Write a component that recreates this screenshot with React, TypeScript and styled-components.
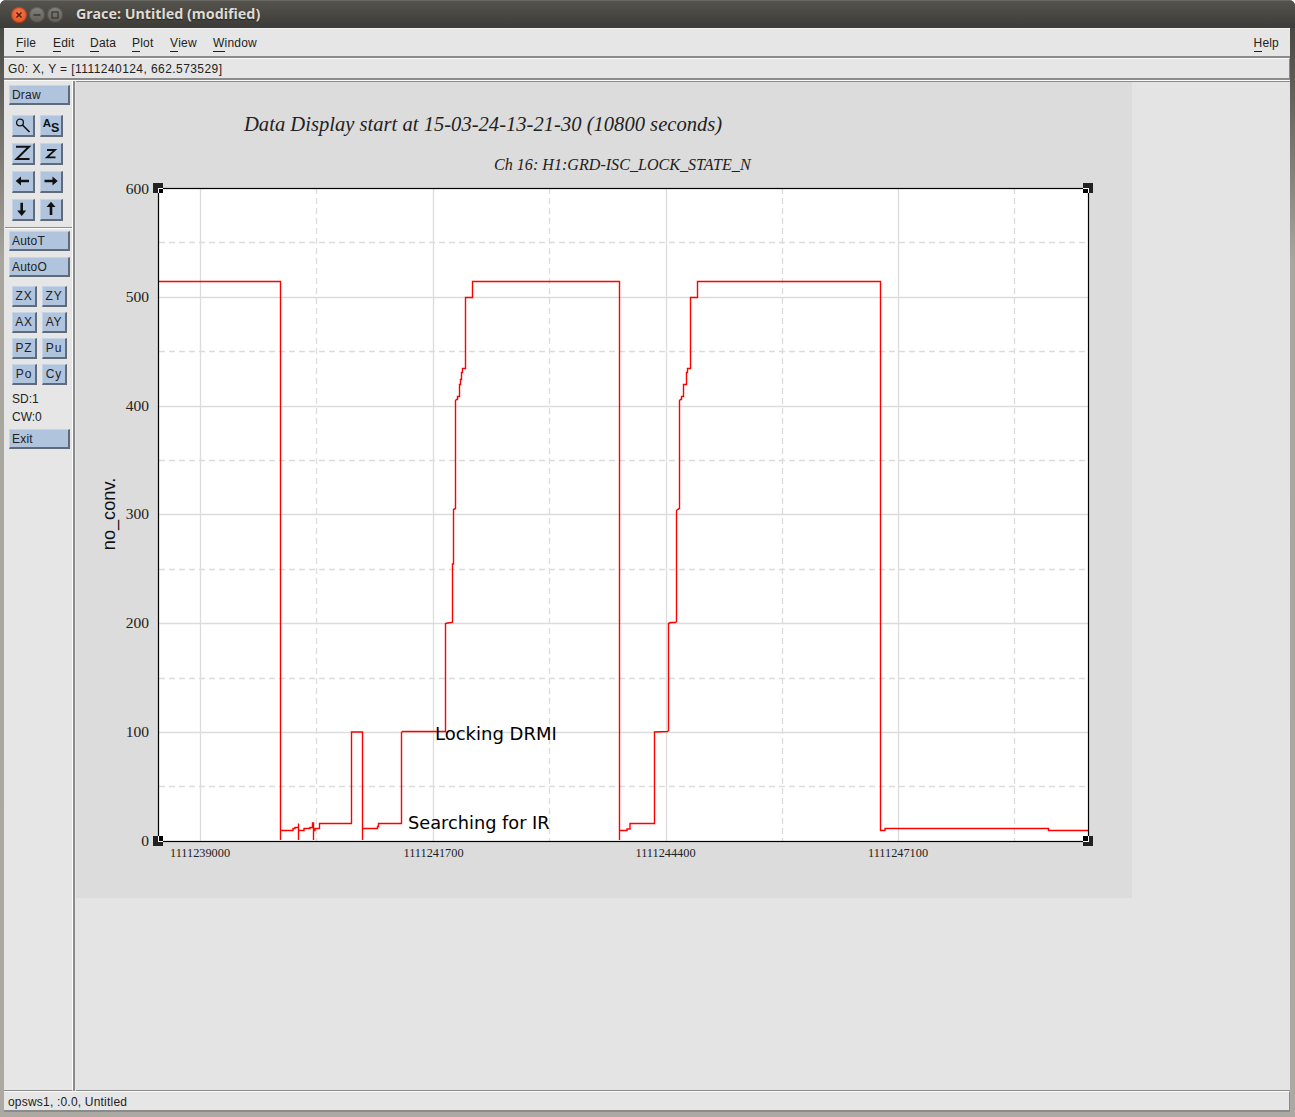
import React from "react";
import styled, { createGlobalStyle } from "styled-components";

const Global = createGlobalStyle`
  html, body { margin: 0; padding: 0; background: #fff; }
  #root { width: 1295px; height: 1117px; }
`;

const Win = styled.div`
  width: 1295px;
  height: 1117px;
  display: flex;
  flex-direction: column;
  overflow: hidden;
  background: linear-gradient(#3f3e3a 0, #55534e 60px, #a9a59f 260px, #aca8a2 100%);
  border-radius: 6px 6px 0 0;
  font-family: "Liberation Sans", Arial, sans-serif;
  font-size: 12px;
  color: #222;
`;

const TitleBar = styled.div`
  height: 28px;
  flex: none;
  display: flex;
  align-items: center;
  background: linear-gradient(#55534d, #3c3b37);
  padding-left: 11px;
  border-top: 1px solid #6a6862;
  box-sizing: border-box;
`;

const WinButton = styled.span<{ $bg: string; $mr: number }>`
  width: 16px;
  height: 16px;
  border-radius: 50%;
  margin-right: ${(p) => p.$mr}px;
  background: ${(p) => p.$bg};
  box-shadow: inset 0 0 0 1px rgba(0, 0, 0, 0.25);
  display: flex;
  align-items: center;
  justify-content: center;
  flex: none;
`;

const TitleText = styled.span`
  margin: -2px 0 0 11px;
  font-family: "Noto Sans", "Open Sans", sans-serif;
  font-weight: 700;
  font-size: 14.3px;
  color: #dfdbd2;
  text-shadow: 0 1px 1px #222;
`;

const Client = styled.div`
  flex: 1;
  margin: 0 5px 5px 4px;
  background: #e6e6e6;
  display: flex;
  flex-direction: column;
  min-height: 0;
`;

const MenuBar = styled.div`
  height: 30px;
  flex: none;
  box-sizing: border-box;
  border-top: 1px solid #f4f4f4;
  border-bottom: 2px solid #8b8b8b;
  display: flex;
  align-items: center;
  padding: 3px 11px 0 12px;
  font-size: 12px;
  letter-spacing: 0.2px;
`;

const MenuItem = styled.span<{ $w?: number }>`
  width: ${(p) => (p.$w ? `${p.$w}px` : "auto")};
  flex: none;
`;

const Mnemonic = styled.span`
  display: inline-block;
  border-bottom: 1px solid #222;
  line-height: 15px;
`;

const Spring = styled.div`
  flex: 1;
`;

const Readout = styled.div`
  height: 22px;
  flex: none;
  box-sizing: border-box;
  border-top: 1px solid #fafafa;
  border-right: 1px solid #8b8b8b;
  border-bottom: 2px solid #8b8b8b;
  padding: 3px 0 0 4px;
  font-size: 12px;
  letter-spacing: 0.43px;
  line-height: 15px;
`;

const Main = styled.div`
  flex: 1;
  display: flex;
  min-height: 0;
  border-top: 1px solid #fafafa;
`;

const ToolPanel = styled.div`
  width: 69px;
  flex: none;
  box-sizing: border-box;
  border-right: 1px solid #fff;
  border-bottom: 1px solid #8b8b8b;
  padding-top: 4px;
  display: flex;
  flex-direction: column;
  margin-right: 3px;
  position: relative;
  box-shadow: 2px 0 0 #8b8b8b;
`;

const WideButton = styled.button<{ $mt: number }>`
  width: 61px;
  height: 20px;
  margin: ${(p) => p.$mt}px 0 0 5px;
  padding: 0 0 0 2px;
  box-sizing: border-box;
  text-align: left;
  background: #b0c4de;
  border: solid;
  border-color: #c6d4e8 #5f6b7b #5f6b7b #c6d4e8;
  border-width: 1px 2px 2px 1px;
  font: 12px "Liberation Sans", Arial, sans-serif;
  letter-spacing: 0.2px;
  color: #222;
`;

const IconGrid = styled.div`
  display: grid;
  grid-template-columns: 23px 23px;
  grid-auto-rows: 22px;
  column-gap: 5px;
  row-gap: 6px;
  margin: 10px 0 0 8px;
`;

const IconButton = styled.button`
  width: 23px;
  height: 22px;
  padding: 0;
  box-sizing: border-box;
  display: flex;
  background: #b0c4de;
  border: solid;
  border-color: #c6d4e8 #5f6b7b #5f6b7b #c6d4e8;
  border-width: 1px 2px 2px 1px;
`;

const Separator = styled.div`
  height: 1px;
  margin: 6px 0 3px 1px;
  background: #8b8b8b;
  box-shadow: 0 1px 0 #fff;
`;

const SmallGrid = styled.div`
  display: grid;
  grid-template-columns: 25px 25px;
  grid-auto-rows: 21px;
  column-gap: 5px;
  row-gap: 5px;
  margin: 9px 0 0 8px;
`;

const SmallButton = styled.button`
  width: 25px;
  height: 21px;
  padding: 0;
  box-sizing: border-box;
  text-align: center;
  background: #b0c4de;
  border: solid;
  border-color: #c6d4e8 #5f6b7b #5f6b7b #c6d4e8;
  border-width: 1px 2px 2px 1px;
  font: 12px "Liberation Sans", Arial, sans-serif;
  letter-spacing: 0.8px;
  color: #222;
`;

const PanelLabel = styled.div<{ $mt: number }>`
  height: 18px;
  line-height: 18px;
  margin: ${(p) => p.$mt}px 0 0 8px;
  font-size: 12px;
`;

const Canvas = styled.div`
  flex: 1;
  background: #e4e4e4;
  min-width: 0;
  border-top: 1px solid #8b8b8b;
  border-bottom: 1px solid #8b8b8b;
`;

const Sheet = styled.div`
  width: 1056px;
  height: 816px;
  background: #dcdcdc;
`;

const PlotSvg = styled.svg`
  display: block;
  overflow: visible;
`;

const StatusBar = styled.div`
  height: 21px;
  flex: none;
  box-sizing: border-box;
  border-top: 1px solid #fafafa;
  border-bottom: 2px solid #8b8b8b;
  border-right: 1px solid #8b8b8b;
  padding: 3px 0 0 4px;
  font-size: 12px;
  letter-spacing: 0.2px;
  line-height: 15px;
`;

const trace: [number, number][] = [
  [159, 281.5], [280.5, 281.5], [280.5, 840], [280.5, 830.5], [293, 830.5], [293, 828.5], [295, 828.5], [295, 827.5],
  [298.5, 827.5], [298.5, 823.5], [298.5, 840], [298.5, 830.5], [304, 830.5], [304, 828.5], [310, 828.5], [310, 827.5],
  [312.5, 827.5], [312.5, 823], [313.5, 823], [313.5, 840], [313.5, 830.5], [315, 830.5], [315, 828.5], [319.5, 828.5],
  [319.5, 823.5], [351.5, 823.5], [351.5, 732], [362.5, 732], [362.5, 840], [362.5, 828.5], [377.5, 828.5], [377.5, 826.5], [378.5, 826.5],
  [378.5, 823.5], [401.5, 823.5], [401.5, 732.5], [402.5, 731.5], [445.5, 731.5], [445.5, 623.5], [447.5, 623], [451.5, 622.5],
  [452.5, 622], [452.5, 564], [453.5, 564], [453.5, 509.5], [455.5, 508.5], [455.5, 400.5], [456.5, 399.5], [457.5, 399.5],
  [457.5, 396.5], [459.5, 396.5], [459.5, 384.5], [460.5, 384.5], [460.5, 379.5], [461.5, 379.5], [461.5, 372.5], [462.5, 372.5],
  [462.5, 368.5], [465.5, 368.5], [465.5, 297.5], [472.5, 297.5], [472.5, 281.5], [619.5, 281.5], [619.5, 840], [619.5, 830.5],
  [627, 830.5], [627, 829], [630, 829], [630, 823.5], [654.5, 823.5], [654.5, 732], [667.5, 731.5], [668.5, 730.5], [668.5, 623.5], [670.5, 622.5], [675.5, 622.5],
  [676.5, 621.5], [676.5, 510.5], [677.5, 509.5], [679.5, 508.5], [679.5, 400.5], [680.5, 399.5], [681.5, 399.5], [681.5, 396.5], [683.5, 396.5],
  [683.5, 384.5], [686.5, 384.5], [686.5, 372.5], [687.5, 372.5], [687.5, 368.5], [690.5, 368.5], [690.5, 297.5], [697.5, 297.5],
  [697.5, 281.5], [880.5, 281.5], [880.5, 830.5], [885, 830.5], [885, 828.5], [1048.5, 828.5], [1048.5, 830.5], [1088, 830.5],
];

const yTicks: [string, number][] = [["600", 189], ["500", 297], ["400", 406], ["300", 514], ["200", 623], ["100", 732], ["0", 841]];
const xTicks: [string, number][] = [["1111239000", 200], ["1111241700", 433.5], ["1111244400", 665.5], ["1111247100", 898]];
const hSolid = [297.5, 406.5, 514.5, 623.5, 732.5];
const hDash = [242.5, 351.5, 460.5, 569.5, 678.5, 786.5];
const vSolid = [200.5, 433.5, 666.5, 898.5];
const vDash = [316.5, 549.5, 782.5, 1014.5];

const Handle = ({ left, top }: { left: boolean; top: boolean }) => {
  const x = left ? 153 : 1083;
  const y = top ? 183 : 836;
  return (
    <g>
      <rect x={x} y={y} width={10} height={10} fill="#222" />
      <rect x={left ? 158 : 1083} y={top ? 188 : 836} width={left ? 5 : 6} height={top ? 5 : 6} fill="#fff" />
      <rect x={left ? 159 : 1083} y={top ? 189 : 836} width={left ? 4 : 5} height={top ? 4 : 5} fill="#000" />
    </g>
  );
};

const Plot = () => (
  <PlotSvg width={1056} height={816} viewBox="76 82 1056 816">
    <rect x={159} y={188} width={929} height={653} fill="#fff" />
    {hSolid.map((y) => <line key={y} x1={159} x2={1088} y1={y} y2={y} stroke="#dcdcdc" strokeWidth={1.3} />)}
    {hDash.map((y) => <line key={y} x1={159} x2={1088} y1={y} y2={y} stroke="#dcdcdc" strokeWidth={1.3} strokeDasharray="6 4" />)}
    {vSolid.map((x) => <line key={x} x1={x} x2={x} y1={188} y2={841} stroke="#dcdcdc" strokeWidth={1.3} />)}
    {vDash.map((x) => <line key={x} x1={x} x2={x} y1={188} y2={841} stroke="#dcdcdc" strokeWidth={1.3} strokeDasharray="6 4" />)}
    <polyline points={trace.map((p) => p.join(",")).join(" ")} fill="none" stroke="#ff0000" strokeWidth={1.4} />
    <rect x={158.5} y={188.5} width={930} height={653} fill="none" stroke="#000" strokeWidth={1.2} />
    <Handle left top />
    <Handle left={false} top />
    <Handle left top={false} />
    <Handle left={false} top={false} />
    <g fontFamily='"Liberation Serif", serif' fill="#222">
      <text x={244} y={131} fontSize={20.6} fontStyle="italic">Data Display start at 15-03-24-13-21-30 (10800 seconds)</text>
      <text x={494} y={170} fontSize={16.1} fontStyle="italic">Ch 16: H1:GRD-ISC_LOCK_STATE_N</text>
      {yTicks.map(([t, y]) => <text key={t} x={149} y={y + 5} fontSize={15.5} textAnchor="end">{t}</text>)}
      {xTicks.map(([t, x]) => <text key={t} x={x} y={857} fontSize={12.3} textAnchor="middle">{t}</text>)}
    </g>
    <text transform="translate(115 514) rotate(-90)" fontFamily='"Liberation Sans", sans-serif' fontSize={18.2} textAnchor="middle" fill="#111">no_conv.</text>
    <g fontFamily='"DejaVu Sans", sans-serif' fill="#000">
      <text x={435} y={740} fontSize={18}>Locking DRMI</text>
      <text x={408} y={829} fontSize={17.75}>Searching for IR</text>
    </g>
  </PlotSvg>
);

const Ico = ({ children }: { children: React.ReactNode }) => (
  <svg width={20} height={19} viewBox="0 1 20 19">{children}</svg>
);

const icons = [
  <Ico key="m"><circle cx={7} cy={7.5} r={3.4} fill="none" stroke="#111" strokeWidth={1.3} /><line x1={9.5} y1={10} x2={16.5} y2={17} stroke="#111" strokeWidth={1.6} /></Ico>,
  <Ico key="a"><text x={1.7} y={11.7} fontFamily='"Liberation Sans", sans-serif' fontSize={11.5} fontWeight={700} fill="#111">A</text><text x={10} y={17.3} fontFamily='"Liberation Sans", sans-serif' fontSize={12.5} fontWeight={700} fill="#111">S</text></Ico>,
  <Ico key="Z"><path d="M3 3.7H16L3.5 16H16.5" fill="none" stroke="#111" strokeWidth={2} /></Ico>,
  <Ico key="z"><path d="M6 7H14L6 14.4H14.5" fill="none" stroke="#111" strokeWidth={1.8} /></Ico>,
  <Ico key="l"><path d="M2.7 10L8 5.5V8.7H16V11.3H8V14.5Z" fill="#111" /></Ico>,
  <Ico key="r"><path d="M16.7 10L11.5 5.5V8.7H3.5V11.3H11.5V14.5Z" fill="#111" /></Ico>,
  <Ico key="d"><path d="M8.7 17L4.2 11.5H7.4V3.7H10V11.5H13.2Z" fill="#111" /></Ico>,
  <Ico key="u"><path d="M10 2.7L5.5 8H8.7V16H11.3V8H14.5Z" fill="#111" /></Ico>,
];

const Win2 = ({ glyph, bg }: { glyph: React.ReactNode; bg: string }) => (
  <WinButton $bg={bg} $mr={2}>
    <svg width={10} height={10} viewBox="0 0 10 10">{glyph}</svg>
  </WinButton>
);

const Menu = ({ first, rest, w }: { first: string; rest: string; w?: number }) => (
  <MenuItem $w={w}>
    <Mnemonic>{first}</Mnemonic>{rest}
  </MenuItem>
);

export default function App() {
  return (
    <>
      <Global />
      <Win>
        <TitleBar>
          <Win2 bg="radial-gradient(circle at 50% 40%, #f47a4e, #dd4814)" glyph={<path d="M2.5 2.5L7.5 7.5M7.5 2.5L2.5 7.5" stroke="#5a1c08" strokeWidth={1.5} />} />
          <Win2 bg="linear-gradient(#85837c, #5e5c56)" glyph={<path d="M1.5 5H8.5" stroke="#3a3935" strokeWidth={1.5} />} />
          <Win2 bg="linear-gradient(#85837c, #5e5c56)" glyph={<rect x={2} y={2} width={6} height={6} fill="none" stroke="#3a3935" strokeWidth={1.3} />} />
          <TitleText>Grace: Untitled (modified)</TitleText>
        </TitleBar>
        <Client>
          <MenuBar>
            <Menu first="F" rest="ile" w={37} />
            <Menu first="E" rest="dit" w={37} />
            <Menu first="D" rest="ata" w={42} />
            <Menu first="P" rest="lot" w={38} />
            <Menu first="V" rest="iew" w={43} />
            <Menu first="W" rest="indow" />
            <Spring />
            <Menu first="H" rest="elp" />
          </MenuBar>
          <Readout>G0: X, Y = [1111240124, 662.573529]</Readout>
          <Main>
            <ToolPanel>
              <WideButton $mt={0}>Draw</WideButton>
              <IconGrid>{icons.map((i, n) => <IconButton key={n}>{i}</IconButton>)}</IconGrid>
              <Separator />
              <WideButton $mt={0}>AutoT</WideButton>
              <WideButton $mt={6}>AutoO</WideButton>
              <SmallGrid>
                {["ZX", "ZY", "AX", "AY", "PZ", "Pu", "Po", "Cy"].map((t) => <SmallButton key={t}>{t}</SmallButton>)}
              </SmallGrid>
              <PanelLabel $mt={5}>SD:1</PanelLabel>
              <PanelLabel $mt={0}>CW:0</PanelLabel>
              <WideButton $mt={3}>Exit</WideButton>
            </ToolPanel>
            <Canvas>
              <Sheet><Plot /></Sheet>
            </Canvas>
          </Main>
          <StatusBar>opsws1, :0.0, Untitled</StatusBar>
        </Client>
      </Win>
    </>
  );
}
